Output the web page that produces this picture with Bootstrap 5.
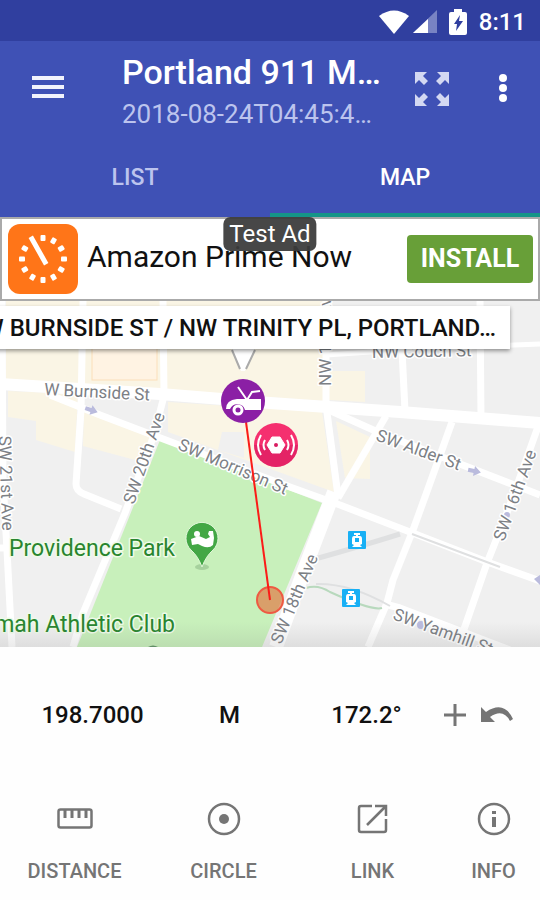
<!DOCTYPE html>
<html lang="en">
<head>
<meta charset="utf-8">
<meta name="viewport" content="width=device-width, initial-scale=1">
<title>Portland 911 Map</title>
<link href="https://cdn.jsdelivr.net/npm/bootstrap@5.3.0/dist/css/bootstrap.min.css" rel="stylesheet">
<style>
  body { font-family: Roboto, "Liberation Sans", sans-serif; background: #fefefe; color: #111; }
  button { font-weight: 500; }
  svg { display: block; flex: none; }
  .status-strip { background: #303f9f; height: 41px; padding: 2px 14px 0; gap: 12px; font-size: 24px; font-weight: 500; line-height: 28px; }
  .app-head { background: #3f51b5; }
  .title-row { height: 96px; padding: 0 16px 0 28px; }
  .title-text { margin-left: 54px; padding-top: 6px; }
  .title-text h1 { font-size: 34px; font-weight: 500; line-height: 40px; }
  .title-text p { font-size: 26px; line-height: 36px; padding-top: 4px; color: #bcc4ee; }
  .head-btn { border: 0; background: none; padding: 0; color: #fff; }
  .full-btn { margin-right: 33px; }
  .tab-btn { border: 0; background: none; height: 80px; padding: 0; font-size: 23px; line-height: 82px; color: #bcc4ee; }
  .tab-btn.current { color: #fff; box-shadow: inset 0 -4px #159588; }
  .ad-box { height: 84px; border: 2px solid #aaa; background: #fff; padding: 0 5px 0 6px; }
  .ad-name { font-size: 30px; line-height: 36px; margin-left: 9px; padding-bottom: 5px; }
  .ad-install { background: #689f38; color: #fff; font-size: 25px; font-weight: 700; border-radius: 4px; height: 48px; width: 126px; padding: 0; line-height: 48px; border: 0; }
  .ad-chip { background: #3c3c3cf0; color: #fff; font-size: 24px; line-height: 34px; border-radius: 7px; padding: 0 6px; top: -2px; left: 50%; transform: translateX(-50%); }
  .map-pane { min-height: 346px; background: #f0f0f0; }
  .map-pane svg.town { position: absolute; inset: 0; width: 100%; height: 100%; }
  .town text { font-size: 17px; fill: #7c8085; stroke: #fff; stroke-width: 3px; paint-order: stroke; stroke-linejoin: round; }
  .town .place { font-size: 23px; fill: #29852f; stroke: #effbe9; }
  .info-window { right: 30px; top: 5px; height: 43px; background: #fff; padding: 0 14px 0 24px; font-size: 24px; font-weight: 500; line-height: 45px; box-shadow: 0 2px 4px #0006; white-space: nowrap; }
  .measure-row { display: grid; grid-template-columns: 1fr 1fr 1fr 40px 44px; height: 136px; padding: 0 21px 0 24px; font-size: 24px; font-weight: 500; }
  .measure-row button { border: 0; background: none; padding: 0; color: inherit; }
  .tool-row { display: grid; grid-template-columns: 149fr 149fr 149fr 93fr; padding: 18px 0 17px; }
  .tool-row button { border: 0; background: none; padding: 0; color: #757575; font-size: 20px; line-height: 24px; gap: 22px; }
</style>
<script src="https://cdn.jsdelivr.net/npm/bootstrap@5.3.0/dist/js/bootstrap.bundle.min.js"></script>
</head>
<body>
<div class="d-flex flex-column min-vh-100">
  <header class="text-white">
    <div class="status-strip d-flex align-items-center justify-content-end">
      <div class="d-flex align-items-center">
        <svg width="30" height="26" viewBox="0 0 30 26" fill="#fff"><path d="M0 7Q15-4 30 7L15 25Z"/></svg>
        <svg class="ms-1" width="24" height="24" viewBox="0 0 24 24"><path d="M0 23L24 0V23Z" fill="#7883c3"/><path d="M0 23L15 9V23Z" fill="#fff"/></svg>
      </div>
      <svg width="18" height="26" viewBox="0 0 18 26"><path d="M5 0H13V3H16Q18 3 18 5V24Q18 26 16 26H2Q0 26 0 24V5Q0 3 2 3H5Z" fill="#fff"/><path d="M11 6L5 15H8L7 22L14 12H10Z" fill="#303f9f"/></svg>
      <span>8:11</span>
    </div>
    <div class="app-head">
      <div class="title-row d-flex align-items-center">
        <button class="head-btn" aria-label="Menu"><svg width="40" height="40" viewBox="0 0 40 40" fill="#f2f3fc"><path d="M4 7H36V11H4ZM4 16H36V20H4ZM4 25H36V29H4Z"/></svg></button>
        <div class="title-text flex-grow-1 overflow-hidden">
          <h1 class="m-0 text-nowrap">Portland 911 M…</h1>
          <p class="m-0 text-nowrap">2018-08-24T04:45:4…</p>
        </div>
        <button class="head-btn full-btn" aria-label="Full screen"><svg width="34" height="34" viewBox="0 0 34 34" fill="#d3d8f2"><g id="arrow"><path d="M0 0H12L8 4L13 9L9 13L4 8L0 12Z"/></g><use href="#arrow" transform="translate(34 0) scale(-1 1)"/><use href="#arrow" transform="translate(0 34) scale(1 -1)"/><use href="#arrow" transform="translate(34 34) scale(-1 -1)"/></svg></button>
        <button class="head-btn" aria-label="More options"><svg width="42" height="32" viewBox="0 0 42 32" fill="#fff"><circle cx="21" cy="5" r="4"/><circle cx="21" cy="15" r="4"/><circle cx="21" cy="25" r="4"/></svg></button>
      </div>
      <nav class="d-flex" aria-label="Views">
        <button class="tab-btn flex-fill w-50">LIST</button>
        <button class="tab-btn current flex-fill w-50" aria-current="page">MAP</button>
      </nav>
    </div>
  </header>

  <section class="ad-box d-flex align-items-center position-relative" aria-label="Advertisement">
    <svg width="70" height="70" viewBox="0 0 70 70"><rect width="70" height="70" rx="12" fill="#ff7518"/>
      <g fill="#fff" transform="translate(35 35)"><rect id="tick" x="-2.500" y="-24" width="5" height="6" rx="1"/><use href="#tick" transform="rotate(30)"/><use href="#tick" transform="rotate(60)"/><use href="#tick" transform="rotate(90)"/><use href="#tick" transform="rotate(120)"/><use href="#tick" transform="rotate(150)"/><use href="#tick" transform="rotate(180)"/><use href="#tick" transform="rotate(210)"/><use href="#tick" transform="rotate(240)"/><use href="#tick" transform="rotate(270)"/><use href="#tick" transform="rotate(300)"/></g>
      <path d="M24 15L37 38" stroke="#fff" stroke-width="5" stroke-linecap="square"/></svg>
    <span class="ad-name flex-grow-1 text-nowrap">Amazon Prime Now</span>
    <button class="ad-install">INSTALL</button>
    <span class="ad-chip position-absolute text-nowrap">Test Ad</span>
  </section>

  <main class="map-pane position-relative overflow-hidden flex-grow-1">
    <svg class="town" viewBox="0 301 540 346" preserveAspectRatio="xMidYMid slice" role="img" aria-label="Street map">
      <defs><linearGradient id="fade" x1="0" y1="0" x2="0" y2="1"><stop offset="0" stop-color="#777" stop-opacity="0"/><stop offset="1" stop-color="#777" stop-opacity=".15"/></linearGradient></defs>
      <rect y="301" width="540" height="346" fill="#f0f0f0"/>
      <g fill="#faf5e5">
        <path d="M6 301H325V401L6 379Z"/><path d="M329 371H365V402L329 400Z"/>
        <path d="M8 391L78 394L75 452L36 440V421L8 417Z"/><path d="M84 412L151 437L139 461L83 446Z"/>
        <path d="M168 402L322 412L334 492L168 432Z"/><path d="M336 421L370 437V479L345 478Z"/>
      </g>
      <path d="M222 432L244 432V458L218 450Z" fill="#f0f0f0"/>
      <rect x="92" y="320" width="65" height="60" fill="#fff3e3" stroke="#fbdfba"/>
      <path d="M160 440L322 503L262 647H77Z" fill="#c8f0bb"/>
      <g fill="none" stroke="#fff" stroke-width="7" stroke-linejoin="round">
        <path d="M0 384L160 394L270 403L400 412L540 423" stroke-width="12"/>
        <path d="M2 301L3 480L7 550L12 647"/><path d="M0 548H7"/>
        <path d="M83 301L81 410L76 484Q76 491 84 494L121 509"/>
        <path d="M163 301L164 396L154 435L125 513L83 613L73 647"/>
        <path d="M50 395L100 415L150 434L290 487L340 505L410 532L490 563L540 581"/>
        <path d="M326 301V405L338 496"/><path d="M386 416L338 498"/>
        <path d="M334 492L303 573L276 647" stroke-width="14"/>
        <path d="M322 407L380 433L540 495"/><path d="M326 355L400 350L540 344" stroke-width="5"/>
        <path d="M402 350L405 411M480 301L481 418M452 422L425 497L413 530L393 580L387 603L368 647"/>
        <path d="M539 424L510 505L487 563L462 635"/><path d="M385 604L400 608L510 650"/>
      </g>
      <g fill="none" stroke="#dfe0e1" stroke-width="5"><path d="M315 559Q365 545 400 534"/><path d="M412 534L500 567" stroke-width="2"/><path d="M316 584Q350 583 390 606" stroke-width="2"/></g>
      <path d="M306 588Q318 584 330 592Q372 611 382 608" fill="none" stroke="#b8d9bd" stroke-width="2"/>
      <g fill="#babbdd"><path d="M-6-2H0V-5L7 0L0 5V2H-6Z" transform="translate(91 410) rotate(18)"/><path d="M-6-2H0V-5L7 0L0 5V2H-6Z" transform="translate(474 471) rotate(12)"/><path d="M534 579L540 575V585Z"/><circle cx="421" cy="625" r="4"/><circle cx="507" cy="515" r="3"/></g>
      <text x="44" y="395" transform="rotate(3 44 395)">W Burnside St</text>
      <text x="177" y="449" transform="rotate(23 177 449)">SW Morrison St</text>
      <text x="375" y="440" transform="rotate(20 375 440)">SW Alder St</text>
      <text x="392" y="619" transform="rotate(20 392 619)">SW Yamhill St</text>
      <text x="134" y="505" transform="rotate(-71 134 505)">SW 20th Ave</text>
      <text x="281" y="645" transform="rotate(-67 281 645)">SW 18th Ave</text>
      <text x="504" y="542" transform="rotate(-70 504 542)">SW 16th Ave</text>
      <text x="-1" y="436" transform="rotate(88 -1 436)">SW 21st Ave</text>
      <text x="331" y="386" transform="rotate(-90 331 386)">NW 18th Ave</text>
      <text x="372" y="358" transform="rotate(-1 372 358)">NW Couch St</text>
      <text class="place" x="9" y="556">Providence Park</text>
      <text class="place" x="175" y="632" text-anchor="end">Multnomah Athletic Club</text>
      <path d="M148 647Q153 644 158 647Z" fill="#5d9163"/>
      <g transform="translate(202 540)"><ellipse cy="27" rx="7" ry="3" fill="#8fbd88" opacity=".6"/><path d="M0 27Q-4 16-11 10A16 16 0 1 1 11 10Q4 16 0 27Z" fill="#43a745" stroke="#e1f7d9"/><circle cx="-5" cy="-6" r="3" fill="#fff"/><path d="M-11-1L-3-4L4-1L8-3L6-6L7-9H11L12-2L11 5Q7 9 0 6L-4 4L-10 5Z" fill="#fff"/></g>
      <g id="tram" transform="translate(357 540)"><rect x="-9" y="-9" width="18" height="18" rx="1" fill="#18b0f5"/><path d="M-3-7H3V-5H1V-4H3Q5-4 5-1V4L3 5L5 7H-5L-3 5L-5 4V-1Q-5-4-3-4H-1V-5H-3Z" fill="#fff"/><path d="M-2-2H2V2H-2Z" fill="#18b0f5"/></g>
      <use href="#tram" x="-6" y="58"/>
      <circle cx="270" cy="600" r="13" fill="#e2733f" fill-opacity=".65" stroke="#ee5a42" stroke-width="2"/>
      <path d="M246 422L270 600" stroke="#fb1c18" stroke-width="2"/>
      <g transform="translate(243 401)"><circle r="22" fill="#8b1fa5"/><path d="M-17 8Q-17-1-6-2H18V9H2A8 8 0 0 0-13 8Z" fill="#fff"/><path d="M-5-14L4-1L9-9L17-10" fill="none" stroke="#fff" stroke-width="2"/><circle cx="-5" cy="9" r="4" fill="none" stroke="#fff" stroke-width="3"/></g>
      <g transform="translate(276 445)"><circle r="22" fill="#f5306f"/><path d="M22 0A22 22 0 0 1-22 0Z" fill="#d81b60" opacity=".6"/><path d="M-4-8H4L9 0L4 8H-4L-9 0Z" fill="#fff" stroke="#fff" stroke-linejoin="round"/><circle r="2" fill="#d81b60"/><g fill="none" stroke="#fff" stroke-width="2"><path d="M11-5Q14 0 11 5M15-10Q21 0 15 10M-11-5Q-14 0-11 5M-15-10Q-21 0-15 10"/></g></g>
      <rect y="622" width="540" height="25" fill="url(#fade)"/>
      <path d="M231 346L241 371H245L256 346Z" fill="#fff"/><path d="M232 350L240 369M255 350L246 369" stroke="#aaa" stroke-width="2"/>
    </svg>
    <div class="info-window position-absolute">W BURNSIDE ST / NW TRINITY PL, PORTLAND…</div>
  </main>

  <footer>
    <div class="measure-row align-items-center text-center">
      <span>198.7000</span>
      <button aria-label="Unit: metres">M</button>
      <span>172.2°</span>
      <button class="d-flex justify-content-center" aria-label="Add point"><svg width="24" height="24" viewBox="0 0 24 24"><path d="M1 12H23M12 1V23" stroke="#757575" stroke-width="3"/></svg></button>
      <button class="d-flex justify-content-center" aria-label="Undo"><svg width="34" height="20" viewBox="0 0 34 20"><path d="M1 2V17H15L10 12Q23 3 30 16L33 14Q24-5 6 7Z" fill="#757575"/></svg></button>
    </div>
    <div class="tool-row">
      <button class="d-flex flex-column align-items-center"><svg width="36" height="36" viewBox="0 0 36 36" fill="none" stroke="#757575" stroke-width="2.500"><rect x="1.500" y="8.500" width="33" height="18" rx="2"/><path d="M8 9V17M15 9V17M22 9V17M29 9V17" stroke-width="3"/></svg>DISTANCE</button>
      <button class="d-flex flex-column align-items-center"><svg width="36" height="36" viewBox="0 0 36 36"><circle cx="18" cy="18" r="15" fill="none" stroke="#757575" stroke-width="2.500"/><circle cx="18" cy="18" r="5" fill="#757575"/></svg>CIRCLE</button>
      <button class="d-flex flex-column align-items-center"><svg width="36" height="36" viewBox="0 0 36 36" fill="none" stroke="#757575" stroke-width="2.500"><path d="M17 5H6Q4 5 4 7V29Q4 31 6 31H29Q31 31 31 29V18M20 5H31V15M31 5L12 24"/></svg>LINK</button>
      <button class="d-flex flex-column align-items-center"><svg width="36" height="36" viewBox="0 0 36 36"><circle cx="18" cy="18" r="15" fill="none" stroke="#757575" stroke-width="2.500"/><path d="M16 10H20V13H16ZM16 16H20V26H16Z" fill="#757575"/></svg>INFO</button>
    </div>
  </footer>
</div>
</body>
</html>
